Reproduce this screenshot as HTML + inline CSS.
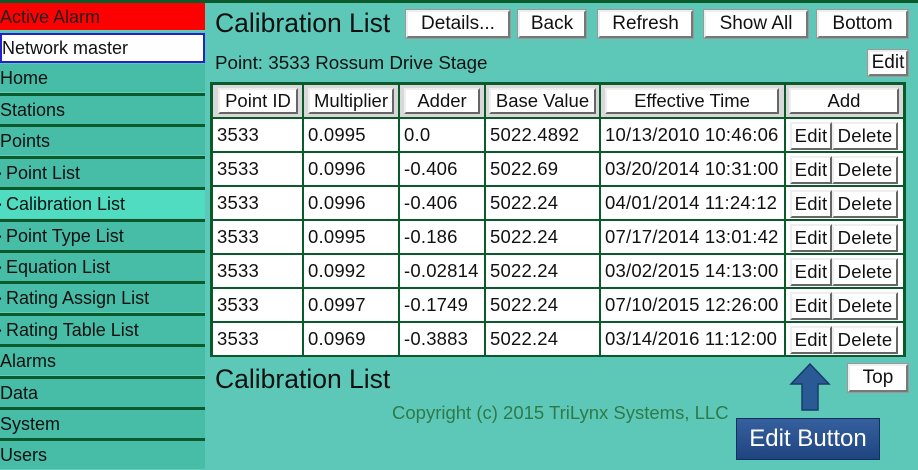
<!DOCTYPE html>
<html><head><meta charset="utf-8"><style>
*{margin:0;padding:0;box-sizing:border-box}
body{width:918px;height:466px;overflow:hidden;background:#5dc8b8;font-family:"Liberation Sans",Arial,sans-serif;position:relative;color:#111}
.a{position:absolute}
.side{left:0;top:0;width:206px;height:466px;background:#5dc8b8}
.top{left:0;top:0;width:918px;height:3px;background:#0b5a2c}
.it{position:absolute;left:0;width:205px;height:29px;background:#47bca6;border-bottom:1px solid #5fcdb8;font-size:18px;line-height:29px;padding-left:0;white-space:nowrap;overflow:hidden}
.it b{font-weight:normal;font-size:10px;display:inline-block;width:8px;vertical-align:middle;margin-left:-2px}
.sep{position:absolute;left:0;width:205px;height:3px;background:#0b5a2c}
.btn{position:absolute;background:#fff;border:2px solid;border-color:#eee #777 #777 #eee;outline:1px solid #999;font-size:19px;text-align:center;color:#111;white-space:nowrap}
.tbl{left:210px;top:82px;width:696px;height:275px;background:#0b5a2c}
.c{position:absolute;background:#fff;font-size:18.5px;padding-left:4px;white-space:nowrap;letter-spacing:0.2px}
.h{position:absolute;background:#d8d8d8}
.hb{position:absolute;background:#fff;border:2px solid;border-color:#eee #666 #666 #eee;font-size:18.5px;text-align:center;line-height:22px;white-space:nowrap}
.sb{position:absolute;background:#fff;border:2px solid;border-color:#eee #666 #666 #eee;font-size:18.5px;text-align:center;line-height:24px;top:3px;height:28px}
</style></head><body>
<div class="a side"></div>
<div class="a top"></div>
<div class="it" style="top:3px;background:#f00;color:#222;height:28px">Active Alarm</div>
<div class="it" style="top:33px;background:#fff;border:2px solid #22c;height:30px;line-height:26px">Network master</div>
<div class="it" style="top:64px">Home</div><div class="sep" style="top:93px"></div>
<div class="it" style="top:96px">Stations</div><div class="sep" style="top:124px"></div>
<div class="it" style="top:127px">Points</div><div class="sep" style="top:156px"></div>
<div class="it" style="top:159px"><b>•</b>Point List</div><div class="sep" style="top:187px"></div>
<div class="it" style="top:190px;background:#4fdcc0"><b>•</b>Calibration List</div><div class="sep" style="top:219px"></div>
<div class="it" style="top:222px"><b>•</b>Point Type List</div><div class="sep" style="top:250px"></div>
<div class="it" style="top:253px"><b>•</b>Equation List</div><div class="sep" style="top:281px"></div>
<div class="it" style="top:284px"><b>•</b>Rating Assign List</div><div class="sep" style="top:313px"></div>
<div class="it" style="top:316px"><b>•</b>Rating Table List</div><div class="sep" style="top:344px"></div>
<div class="it" style="top:347px">Alarms</div><div class="sep" style="top:376px"></div>
<div class="it" style="top:379px">Data</div><div class="sep" style="top:407px"></div>
<div class="it" style="top:410px">System</div><div class="sep" style="top:438px"></div>
<div class="it" style="top:441px">Users</div>

<div class="a" style="left:215px;top:8px;font-size:26.5px">Calibration List</div>
<div class="btn" style="left:406px;top:10px;width:104px;height:28px;line-height:24px">Details...</div>
<div class="btn" style="left:518px;top:10px;width:68px;height:28px;line-height:24px">Back</div>
<div class="btn" style="left:598px;top:10px;width:95px;height:28px;line-height:24px">Refresh</div>
<div class="btn" style="left:704px;top:10px;width:104px;height:28px;line-height:24px">Show All</div>
<div class="btn" style="left:817px;top:10px;width:91px;height:28px;line-height:24px">Bottom</div>
<div class="a" style="left:215px;top:52px;font-size:18.8px">Point: 3533 Rossum Drive Stage</div>
<div class="btn" style="left:868px;top:50px;width:40px;height:26px;line-height:22px">Edit</div>

<div class="a tbl"></div>
<div class="h" style="left:213px;top:85px;width:89px;height:32px"></div>
<div class="h" style="left:304px;top:85px;width:94px;height:32px"></div>
<div class="h" style="left:400px;top:85px;width:84px;height:32px"></div>
<div class="h" style="left:486px;top:85px;width:113px;height:32px"></div>
<div class="h" style="left:601px;top:85px;width:183px;height:32px"></div>
<div class="h" style="left:786px;top:85px;width:117px;height:32px"></div>
<div class="hb" style="left:218px;top:88px;width:80px;height:26px">Point ID</div>
<div class="hb" style="left:308px;top:88px;width:86px;height:26px">Multiplier</div>
<div class="hb" style="left:404px;top:88px;width:76px;height:26px">Adder</div>
<div class="hb" style="left:489px;top:88px;width:107px;height:26px">Base Value</div>
<div class="hb" style="left:605px;top:88px;width:174px;height:26px">Effective Time</div>
<div class="hb" style="left:789px;top:88px;width:110px;height:26px">Add</div>

<div id="rows"></div>
<script>
var d=[["0.0995","0.0","5022.4892","10/13/2010 10:46:06"],["0.0996","-0.406","5022.69","03/20/2014 10:31:00"],["0.0996","-0.406","5022.24","04/01/2014 11:24:12"],["0.0995","-0.186","5022.24","07/17/2014 13:01:42"],["0.0992","-0.02814","5022.24","03/02/2015 14:13:00"],["0.0997","-0.1749","5022.24","07/10/2015 12:26:00"],["0.0969","-0.3883","5022.24","03/14/2016 11:12:00"]];
var L=[213,304,400,486,601,786],W=[89,94,84,113,183,117],h="";
d.forEach(function(r,i){var t=119+34*i;var v=["3533"].concat(r);
for(var j=0;j<5;j++)h+='<div class="c" style="left:'+L[j]+'px;top:'+t+'px;width:'+W[j]+'px;height:32px;line-height:32px;overflow:hidden">'+v[j]+'</div>';
h+='<div class="c" style="left:786px;top:'+t+'px;width:117px;height:32px;padding:0"><div class="sb" style="left:4px;width:42px">Edit</div><div class="sb" style="left:46px;width:66px">Delete</div></div>';});
document.getElementById("rows").innerHTML=h;
</script>

<div class="a" style="left:215px;top:364px;font-size:26.5px">Calibration List</div>
<div class="btn" style="left:848px;top:364px;width:60px;height:28px;line-height:24px">Top</div>
<div class="a" style="left:392px;top:402px;font-size:18.5px;color:#2f7a4a">Copyright (c) 2015 TriLynx Systems, LLC</div>
<svg class="a" style="left:785px;top:362px" width="50" height="50" viewBox="0 0 50 50"><path d="M25 2 L44 22 L33 22 L33 48 L17 48 L17 22 L6 22 Z" fill="#2a5a96" stroke="#1a3a66" stroke-width="1.5"/></svg>
<div class="a" style="left:736px;top:418px;width:144px;height:42px;background:linear-gradient(#35609e,#1f4580);border:1px solid #14305c;color:#fff;font-size:24px;line-height:40px;text-align:center;white-space:nowrap">Edit Button</div>
</body></html>
